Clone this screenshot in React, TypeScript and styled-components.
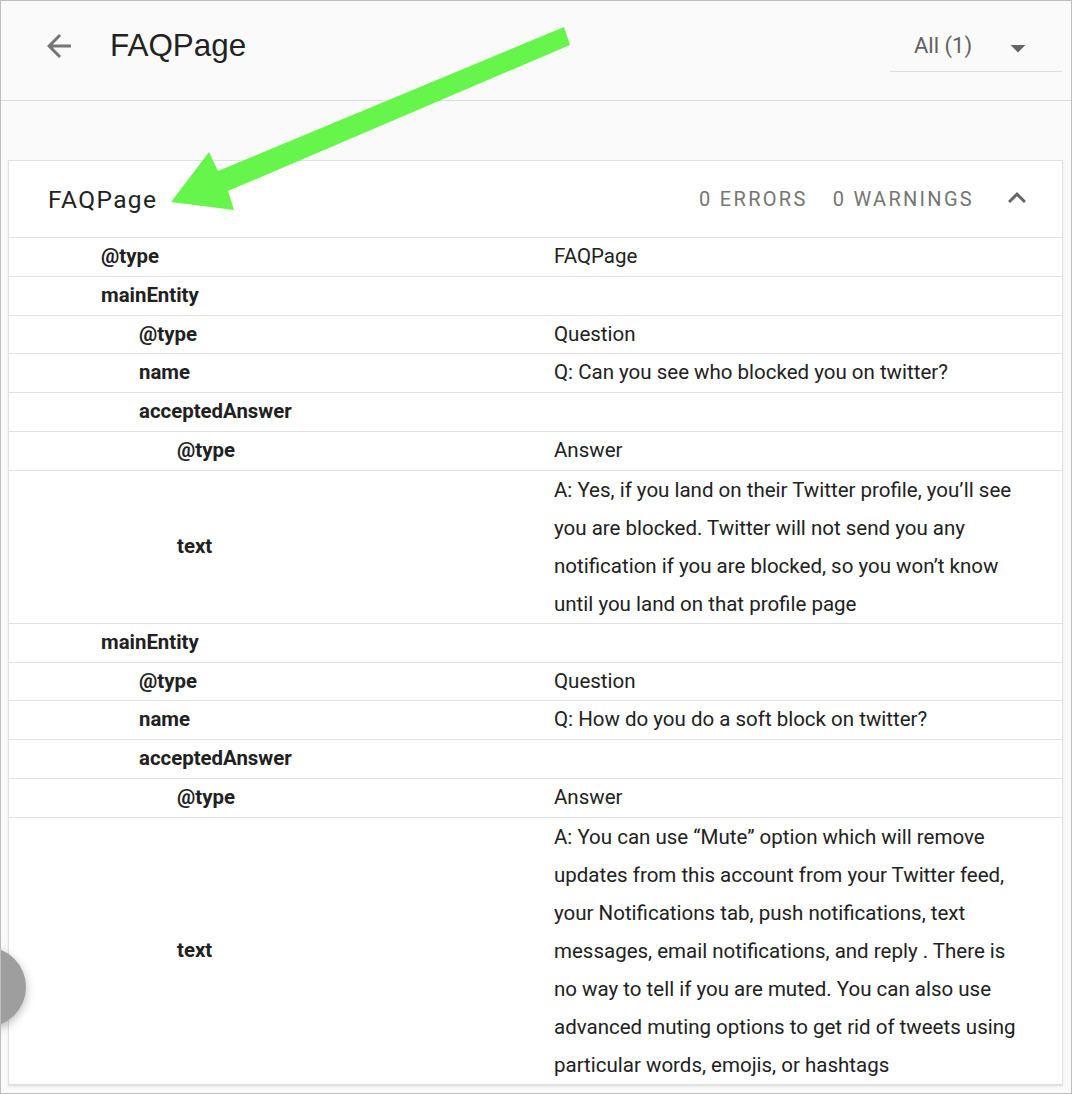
import React from "react";
import styled, { createGlobalStyle } from "styled-components";

const Global = createGlobalStyle`
  html, body { margin: 0; padding: 0; background: #ffffff; }
  * { box-sizing: border-box; }
`;

const Frame = styled.div`
  position: relative;
  width: 1072px;
  height: 1094px;
  overflow: hidden;
  border: 1px solid #bdbdbd;
  background: #fafafa;
  font-family: Roboto, "Liberation Sans", sans-serif;
`;

const TopBar = styled.header`
  display: flex;
  align-items: center;
  height: 100px;
  padding: 0 9px 10px 40px;
  border-bottom: 1px solid #dcdcdc;
  background: #fafafa;
`;

const BackButton = styled.div`
  width: 36px;
  height: 36px;
  display: flex;
  color: #757575;
`;

const PageTitle = styled.h1`
  margin: 0 0 0 33px;
  font-family: "Liberation Sans", Arial, sans-serif;
  font-weight: 400;
  font-size: 31.4px;
  color: #222222;
  flex: 1;
`;

const Select = styled.div`
  display: flex;
  align-items: center;
  width: 172px;
  height: 52px;
  padding: 0 0 0 24px;
  border-bottom: 1px solid #dddddd;
  margin-top: 1px;
`;

const SelectLabel = styled.span`
  font-size: 22px;
  color: #616161;
  flex: 1;
`;

const Caret = styled.div`
  width: 36px;
  height: 36px;
  margin-right: 26px;
  margin-top: 4px;
  color: #666666;
  display: flex;
`;

const Card = styled.section`
  margin: 59px 8px 0 7px;
  background: #ffffff;
  border: 1px solid #e0e0e0;
  box-shadow: 0 1px 3px rgba(0, 0, 0, 0.06);
`;

const CardHeader = styled.div`
  display: flex;
  align-items: center;
  height: 77px;
  padding: 0 27px 0 39px;
  border-bottom: 1px solid #e0e0e0;
`;

const CardTitle = styled.div`
  flex: 1;
  font-size: 24.5px;
  letter-spacing: 1.4px;
  color: #212121;
`;

const Count = styled.span<{ $gap?: number }>`
  font-size: 20px;
  letter-spacing: 2.3px;
  color: #757575;
  margin-right: ${(p) => p.$gap ?? 0}px;
`;

const Chevron = styled.div`
  width: 36px;
  height: 36px;
  display: flex;
  color: #666666;
  margin-top: -2px;
`;

const Row = styled.div`
  display: grid;
  grid-template-columns: 545px 1fr;
  align-items: center;
  border-bottom: 1px solid #e0e0e0;
`;

const Key = styled.div<{ $depth: number }>`
  padding-left: ${(p) => 92 + p.$depth * 38}px;
  font-size: 20.4px;
  font-weight: 700;
  line-height: 37.8px;
  color: #212121;
`;

const Value = styled.div<{ $multi: boolean }>`
  font-size: 20.5px;
  line-height: ${(p) => (p.$multi ? "38px" : "37.8px")};
  color: #212121;
  min-height: 37.8px;
`;

const Line = styled.span`
  display: block;
  white-space: nowrap;
`;

const Fab = styled.div`
  position: absolute;
  left: -55px;
  top: 946px;
  width: 80px;
  height: 80px;
  border-radius: 50%;
  background: #9e9e9e;
  box-shadow: 0 3px 10px rgba(0, 0, 0, 0.28);
`;

const Overlay = styled.svg`
  position: absolute;
  left: 0;
  top: 0;
  pointer-events: none;
`;

type Entry = { key: string; depth: number; value?: string[] };

const rows: Entry[] = [
  { key: "@type", depth: 0, value: ["FAQPage"] },
  { key: "mainEntity", depth: 0 },
  { key: "@type", depth: 1, value: ["Question"] },
  { key: "name", depth: 1, value: ["Q: Can you see who blocked you on twitter?"] },
  { key: "acceptedAnswer", depth: 1 },
  { key: "@type", depth: 2, value: ["Answer"] },
  {
    key: "text",
    depth: 2,
    value: [
      "A: Yes, if you land on their Twitter profile, you\u2019ll see",
      "you are blocked. Twitter will not send you any",
      "notification if you are blocked, so you won\u2019t know",
      "until you land on that profile page",
    ],
  },
  { key: "mainEntity", depth: 0 },
  { key: "@type", depth: 1, value: ["Question"] },
  { key: "name", depth: 1, value: ["Q: How do you do a soft block on twitter?"] },
  { key: "acceptedAnswer", depth: 1 },
  { key: "@type", depth: 2, value: ["Answer"] },
  {
    key: "text",
    depth: 2,
    value: [
      "A: You can use \u201cMute\u201d option which will remove",
      "updates from this account from your Twitter feed,",
      "your Notifications tab, push notifications, text",
      "messages, email notifications, and reply . There is",
      "no way to tell if you are muted. You can also use",
      "advanced muting options to get rid of tweets using",
      "particular words, emojis, or hashtags",
    ],
  },
];

export default function App() {
  return (
    <>
      <Global />
      <Frame>
        <TopBar>
          <BackButton>
            <svg width="36" height="36" viewBox="0 0 24 24" fill="currentColor">
              <path d="M20 11H7.83l5.59-5.59L12 4l-8 8 8 8 1.41-1.41L7.83 13H20v-2z" />
            </svg>
          </BackButton>
          <PageTitle>FAQPage</PageTitle>
          <Select>
            <SelectLabel>All (1)</SelectLabel>
            <Caret>
              <svg width="36" height="36" viewBox="0 0 24 24" fill="currentColor">
                <path d="M7 10l5 5 5-5z" />
              </svg>
            </Caret>
          </Select>
        </TopBar>
        <Card>
          <CardHeader>
            <CardTitle>FAQPage</CardTitle>
            <Count $gap={25}>0 ERRORS</Count>
            <Count $gap={25}>0 WARNINGS</Count>
            <Chevron>
              <svg width="36" height="36" viewBox="0 0 24 24" fill="currentColor">
                <path d="M12 8l-6 6 1.41 1.41L12 10.83l4.59 4.58L18 14z" />
              </svg>
            </Chevron>
          </CardHeader>
          {rows.map((r, i) => (
            <Row key={i}>
              <Key $depth={r.depth}>{r.key}</Key>
              <Value $multi={(r.value?.length ?? 0) > 1}>
                {(r.value ?? []).map((l, j) => (
                  <Line key={j}>{l}</Line>
                ))}
              </Value>
            </Row>
          ))}
        </Card>
        <Fab />
        <Overlay width="1072" height="1094" viewBox="0 0 1072 1094">
          <polygon
            points="563,26 569,44 227,190 233,209 170,201 208,151 217,170"
            fill="#66f54a"
          />
        </Overlay>
      </Frame>
    </>
  );
}
